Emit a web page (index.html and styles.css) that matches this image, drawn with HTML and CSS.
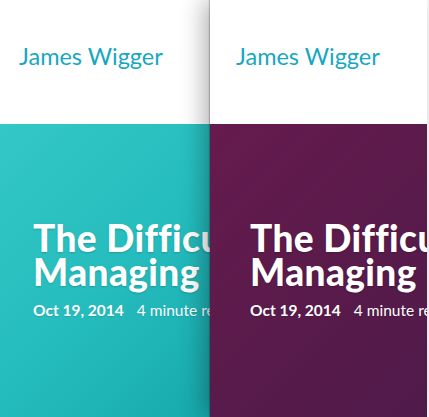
FILE: index.html
```html
<!DOCTYPE html>
<html>
<head>
<meta charset="utf-8">
<link rel="stylesheet" href="styles.css">
</head>
<body>
<div class="deck">
  <article class="card card-teal">
    <header class="card-head"><span class="brand">James Wigger</span></header>
    <section class="card-body">
      <h1 class="title"><span class="line">The Difficulty of</span><span class="line">Managing Remote Teams</span></h1>
      <p class="meta"><span class="date">Oct 19, 2014</span><span class="read">4 minute read</span></p>
    </section>
  </article>
  <article class="card card-plum">
    <header class="card-head"><span class="brand">James Wigger</span></header>
    <section class="card-body">
      <h1 class="title"><span class="line">The Difficulty of</span><span class="line">Managing Remote Teams</span></h1>
      <p class="meta"><span class="date">Oct 19, 2014</span><span class="read">4 minute read</span></p>
    </section>
  </article>
</div>
</body>
</html>
```
FILE: styles.css
```css
html, body {
  margin: 0;
  padding: 0;
  width: 429px;
  height: 417px;
  overflow: hidden;
  background: #fff;
}
.deck {
  display: flex;
  margin-left: -7px;
  height: 417px;
}
.card {
  flex: 0 0 217px;
  width: 217px;
  height: 417px;
  overflow: hidden;
  display: flex;
  flex-direction: column;
  position: relative;
  font-family: Lato, "Open Sans", sans-serif;
}
.card-plum {
  z-index: 2;
  box-shadow: -6px 0 22px rgba(0, 0, 0, 0.3), -1px 0 1px rgba(0, 0, 0, 0.2);
}
.card-head {
  height: 124px;
  flex: 0 0 124px;
  background: #fff;
  box-sizing: border-box;
  padding: 42px 0 0 26px;
}
.brand {
  font-size: 23.5px;
  font-weight: 400;
  color: #17a7c0;
}
.card-body {
  flex: 1;
  padding: 97px 0 0 40px;
  color: #fff;
}
.card-teal .card-body {
  background: linear-gradient(135deg, #34c8c7 0%, #25bcbd 55%, #17a9ad 100%);
}
.card-plum .card-body {
  background: linear-gradient(135deg, #661a4e 0%, #5a1b4b 50%, #4f1a4a 100%);
}
.title {
  margin: 0;
  font-size: 37px;
  font-weight: 900;
  line-height: 34px;
  letter-spacing: 0.4px;
  text-shadow: 0 1px 2px rgba(0, 0, 0, 0.18);
}
.line {
  display: block;
  white-space: nowrap;
}
.meta {
  margin: 12px 0 0;
  font-size: 15.5px;
  line-height: normal;
  white-space: nowrap;
  display: flex;
  gap: 13px;
  text-shadow: 0 1px 1px rgba(0, 0, 0, 0.12);
}
.date {
  font-weight: 700;
}
.read {
  font-weight: 400;
}
```
